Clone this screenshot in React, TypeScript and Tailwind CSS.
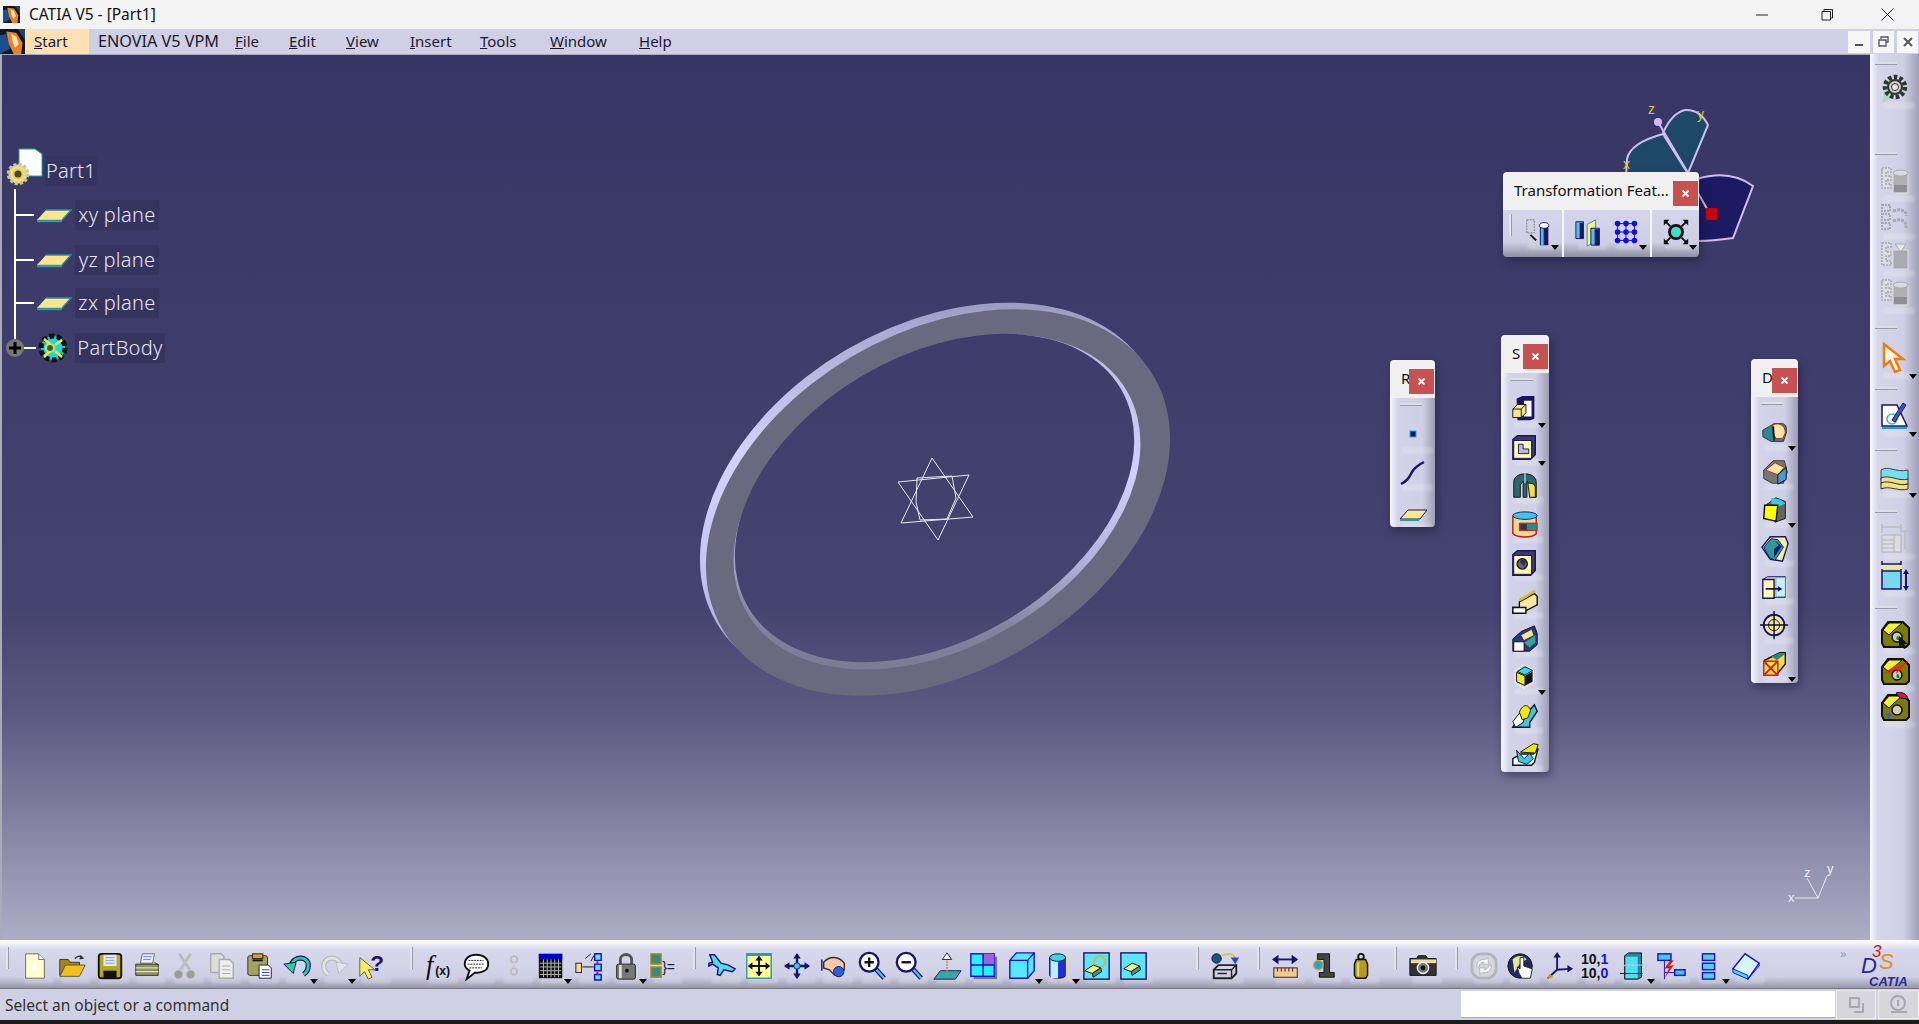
import React from 'react';

const NAVY = '#1b1464';

const Ic: React.FC<{ children: React.ReactNode; s?: number }> = ({ children, s = 32 }) => (
  <svg viewBox="0 0 32 32" width={s} height={s} className="relative block shrink-0">
    {children}
  </svg>
);

const CatiaMark: React.FC<{ s: number }> = ({ s }) => (
  <svg viewBox="0 0 20 20" width={s} height={s} className="block shrink-0">
    <rect width="20" height="20" fill="#0b1626" />
    <path d="M0 5l5-1 3 12-8 4z" fill="#1c4f8c" />
    <path d="M5 2l8 1 5 8-1 9-6 0-4-8z" fill="#e8812a" />
    <path d="M9 4l4 2 2 6-3 3-2-5z" fill="#ffe4a8" />
    <path d="M14 0l6 0 0 9z" fill="#22406a" />
  </svg>
);

const icons: Record<string, React.ReactNode> = {
  new: <><path d="M6 3h14l6 6v20H6z" fill="#ffffcc" stroke="#666" /><path d="M20 3v6h6" fill="#fff" stroke="#666" /><path d="M13 15l3-5 1 5 4-1-3 4 3 3-5-1-2 3-1-4-3-1z" fill="#fff" /></>,
  open: <><path d="M3 9h9l2 3h10v4H9L3 26z" fill="#a88408" stroke="#333" /><path d="M9 15h21l-6 12H3z" fill="#f3bf1c" stroke="#554" /><path d="M19 8c3-3 6-3 8-1" fill="none" stroke="#333" strokeWidth="1.5" /><path d="M25 4l4 4-5 1z" fill="#333" /></>,
  save: <><rect x="4" y="3" width="24" height="26" rx="3" fill="#b5a81c" stroke="#111" strokeWidth="2" /><rect x="9" y="4" width="14" height="12" fill="#dfe8f8" /><path d="M11 7h10M11 10h10M11 13h10" stroke="#7aa0e0" /><rect x="9" y="21" width="14" height="8" fill="#111" /></>,
  print: <><path d="M11 3h13l-2 10H9z" fill="#eef" stroke="#667" /><path d="M12 6h9M12 9h8" stroke="#4a8ae0" /><path d="M4 14h24v12H4z" fill="#8f9460" stroke="#333" /><path d="M4 18h24M4 22h24" stroke="#dfe0b0" strokeWidth="1.5" /><path d="M24 12l4 3" stroke="#333" /></>,
  cut: <><path d="M10 3l11 17M22 3L11 20" stroke="#bcbcbc" strokeWidth="3" /><circle cx="9" cy="25" r="4.5" fill="#9c9c9c" stroke="#bbb" /><circle cx="22" cy="25" r="4.5" fill="#9c9c9c" stroke="#bbb" /></>,
  copy: <><path d="M4 3h11l3 3v17H4z" fill="#ddd" stroke="#aaa" strokeWidth="1.5" /><path d="M13 9h11l4 4v16H13z" fill="#eee" stroke="#aaa" strokeWidth="1.5" /><path d="M16 16h9M16 20h9M16 24h9" stroke="#aaa" /></>,
  paste: <><rect x="3" y="5" width="21" height="21" rx="2" fill="#a3a35c" stroke="#333" /><rect x="8" y="3" width="11" height="5" fill="#d8a020" stroke="#222" /><path d="M8 10h11" stroke="#111" strokeWidth="2" /><path d="M15 15h10l3 3v11H15z" fill="#fff" stroke={NAVY} /><path d="M18 20h8M18 23h8M18 26h8" stroke="#2040d0" /></>,
  undo: <><path d="M10 15c2-10 19-10 18 1 0 4-2 7-5 9" fill="none" stroke={NAVY} strokeWidth="5.5" /><path d="M10 15c2-10 19-10 18 1 0 4-2 7-5 9" fill="none" stroke="#28d0a0" strokeWidth="3" /><path d="M2 14l13-2-3 12z" fill="#28d0a0" stroke={NAVY} /></>,
  redo: <><path d="M22 15C20 5 4 5 4 16c0 4 2 7 5 9" fill="none" stroke="#bbb" strokeWidth="5.5" /><path d="M22 15C20 5 4 5 4 16c0 4 2 7 5 9" fill="none" stroke="#e2e2ee" strokeWidth="3" /><path d="M30 14l-13-2 3 12z" fill="#e2e2ee" stroke="#bbb" /></>,
  help: <><path d="M3 7v20l5-5 4 8 4-2-4-8h7z" fill="#f6f060" stroke="#555" /><text x="14" y="21" fontSize="24" fontWeight="700" fill={NAVY} fontFamily="Liberation Sans, sans-serif">?</text></>,
  fx: <><text x="2" y="24" fontSize="28" fontStyle="italic" fill="#111" fontFamily="Liberation Serif, serif">f</text><text x="12" y="26" fontSize="13" fontWeight="700" fill="#111" fontFamily="Liberation Sans, sans-serif">(x)</text></>,
  speech: <><path d="M16 4c8 0 13 4 13 10s-6 10-14 9l-9 7 3-9c-3-2-5-4-5-7C4 8 9 4 16 4z" fill="#fff" stroke="#111" strokeWidth="2" /><path d="M8 10h16M7 14h18M9 18h13" stroke="#111" strokeDasharray="2 1" /></>,
  chain: <><circle cx="16" cy="9" r="3.5" fill="none" stroke="#bbb" strokeWidth="2" /><circle cx="16" cy="22" r="3.5" fill="none" stroke="#bbb" strokeWidth="2" /><path d="M16 12v6" stroke="#ccc" strokeWidth="3" /></>,
  table: <><rect x="3" y="3" width="25" height="26" fill="#111" /><rect x="3" y="3" width="25" height="6" fill="#0000cc" /><path d="M4 13h23M4 17h23M4 21h23M4 25h23M8 9v19M12 9v19M16 9v19M20 9v19M24 9v19" stroke="#bbb" /></>,
  tree: <><path d="M22 3h7v7h-7zM22 14h7v7h-7zM22 25h7v6h-7z" fill="#5fe0ff" stroke="#1010d0" strokeWidth="1.5" /><rect x="2" y="13" width="6" height="10" fill="#f8e070" stroke={NAVY} /><path d="M9 17h12M18 11l3-6M12 8l6-5" stroke="#111" /><path d="M25 11v3M25 22v3" stroke="#d01010" strokeWidth="2" /></>,
  lock: <><path d="M10 14V9c0-7 12-7 12 0v5" fill="none" stroke="#555" strokeWidth="3" /><rect x="6" y="14" width="20" height="16" rx="2" fill="#777" stroke="#222" /><path d="M10 15v14" stroke="#ddd" strokeWidth="3" /><circle cx="17" cy="21" r="2" fill="#111" /></>,
  brace: <><rect x="2" y="3" width="11" height="11" fill="#3a8a78" stroke="#b09020" strokeWidth="1.5" /><rect x="2" y="17" width="11" height="11" fill="#3a8a78" stroke="#b09020" strokeWidth="1.5" /><text x="14" y="22" fontSize="15" fill="#222" fontFamily="Liberation Sans, sans-serif">{'}='}</text></>,
  fly: <><path d="M3 4l5 0 7 9 8 2 7 4-3 3-9-2-4 6-3-1 1-7-6-4-4 2 0-3 4-1z" fill="#50dcec" stroke={NAVY} strokeWidth="1.5" /></>,
  fit: <><rect x="3" y="3" width="26" height="26" fill="#ffff99" stroke="#2a9a9a" strokeWidth="1.5" /><path d="M3 4h26" stroke="#2a9a9a" strokeWidth="2.5" /><path d="M16 6v20M6 16h20" stroke="#111" strokeWidth="2" /><path d="M16 5l-4 5h8zM16 27l-4-5h8zM4 16l5-4v8zM28 16l-5-4v8z" fill="#111" /></>,
  pan: <><path d="M16 4v24M4 16h24" stroke={NAVY} strokeWidth="2.5" /><path d="M16 2l-4 6h8zM16 30l-4-6h8zM2 16l6-4v8zM30 16l-6-4v8z" fill={NAVY} /><circle cx="16" cy="16" r="3.5" fill="#29d0ee" stroke={NAVY} /></>,
  rotate: <><path d="M5 12c6-7 16-7 22 1l0 7-10 6-6-6-6-2z" fill="#f4c8a8" stroke="#333" strokeWidth="1.5" /><circle cx="21" cy="22" r="5.5" fill="#2860e0" stroke={NAVY} /><path d="M3 9v12" stroke={NAVY} strokeWidth="1.5" /></>,
  zoomin: <><path d="M20 19l9 10" stroke={NAVY} strokeWidth="5" /><path d="M20 19l9 10" stroke="#46c8e8" strokeWidth="2.5" /><circle cx="13" cy="12" r="10" fill="#fff" stroke={NAVY} strokeWidth="2.5" /><path d="M13 7v10M8 12h10" stroke="#111" strokeWidth="2.5" /></>,
  zoomout: <><path d="M20 19l9 10" stroke={NAVY} strokeWidth="5" /><path d="M20 19l9 10" stroke="#46c8e8" strokeWidth="2.5" /><circle cx="13" cy="12" r="10" fill="#fff" stroke={NAVY} strokeWidth="2.5" /><path d="M8 12h10" stroke="#111" strokeWidth="2.5" /></>,
  normal: <><path d="M9 21h22l-6 9H2z" fill="#36a8a8" stroke={NAVY} /><path d="M16 8v16" stroke="#e08020" strokeWidth="1.5" strokeDasharray="2 1" /><path d="M16 2l-5 7h10z" fill="#fff" stroke={NAVY} /></>,
  quad: <><rect x="5" y="6" width="25" height="24" fill="#777" /><rect x="2" y="3" width="25" height="24" fill="#28f0ff" stroke="#1010d0" strokeWidth="1.5" /><rect x="15" y="3" width="12" height="12" fill="#a060d8" /><path d="M15 3v24M2 15h25" stroke="#1010d0" strokeWidth="1.5" /></>,
  cube: <><path d="M3 10l7-8h19v19l-7 8H3z" fill="#55e8ff" stroke="#1010e0" strokeWidth="1.5" /><path d="M3 10h19v19M22 10l7-8" fill="none" stroke="#1010e0" strokeWidth="1.5" /></>,
  cyl: <><path d="M6 7v19c0 4 17 4 17 0V7" fill="#2030d0" stroke="#111" /><path d="M7 8h8v21H7z" fill="#b8f0ff" /><ellipse cx="14.5" cy="7" rx="8.5" ry="4" fill="#30d8f0" stroke="#111" /><path d="M24 7v20" stroke="#f0e060" strokeWidth="1.5" /></>,
  hide: <><rect x="2" y="2" width="27" height="28" fill="#5ce4f8" stroke={NAVY} strokeWidth="1.5" /><circle cx="19" cy="11" r="6" fill="none" stroke="#c8b850" strokeWidth="2" /><path d="M3 21l9-6 8 3-9 6z" fill="#f0f080" stroke="#111" /><path d="M11 24l9-6 1 4-9 6z" fill="#30a090" stroke="#111" /></>,
  swap: <><rect x="2" y="2" width="27" height="28" fill="#5ce4f8" stroke={NAVY} strokeWidth="1.5" /><path d="M5 19l9-6 8 3-9 6z" fill="#f0f080" stroke="#111" /><path d="M13 22l9-6 1 4-9 6z" fill="#30a090" stroke="#111" /></>,
  spec: <><circle cx="7" cy="8" r="5" fill="#105a80" stroke="#111" /><path d="M13 5c6-3 12-3 14 3" fill="none" stroke="#e0c040" strokeWidth="2" /><path d="M22 7h9l-4 7z" fill="#1a50e0" /><path d="M4 20l5-5h19v9l-5 5H4z" fill="none" stroke="#222" strokeWidth="2" /><path d="M4 20h19v9M23 20l5-5M8 24h10" fill="none" stroke="#222" strokeWidth="1.5" /></>,
  measure: <><path d="M3 9h24" stroke={NAVY} strokeWidth="2" /><path d="M1 9l7-5v10zM29 9l-7-5v10z" fill={NAVY} /><rect x="3" y="18" width="25" height="10" fill="#f4c890" stroke="#222" /><path d="M7 18v4M11 18v4M15 18v4M19 18v4M23 18v4" stroke="#222" /></>,
  inertia: <><path d="M10 3h13v20h5v5H12v-5h5V9h-7z" fill="#444" stroke="#111" /><circle cx="11" cy="15" r="5" fill="#2ca0d0" stroke="#c8b020" strokeWidth="1.5" /></>,
  weight: <><circle cx="16" cy="6" r="3" fill="none" stroke="#111" strokeWidth="2" /><path d="M11 9h10l2 5v12l-2 3H11l-2-3V14z" fill="#b49a20" stroke="#111" strokeWidth="1.5" /><path d="M13 12v15" stroke="#eedd70" strokeWidth="2" /></>,
  camera: <><path d="M2 8h7l2-3h8l2 3h9v18H2z" fill="#333" stroke="#111" /><path d="M3 9h27v4H3z" fill="#f0d8a0" /><circle cx="16" cy="18" r="6" fill="#777" stroke="#eee" strokeWidth="1.5" /><circle cx="16" cy="18" r="2.5" fill="#111" /></>,
  refresh: <><rect x="3" y="3" width="26" height="26" rx="10" fill="#d6d6e0" stroke="#b4b4bc" strokeWidth="3" /><path d="M8 17c0-6 5-9 10-8l2-2 1 7-7 0 2-2c-3 0-5 2-5 5zM24 15c0 6-5 9-10 8l-2 2-1-7 7 0-2 2c3 0 5-2 5-5z" fill="#f4f4f8" stroke="#b4b4bc" /></>,
  hand: <><circle cx="15" cy="16" r="13" fill="#1e2a6a" stroke="#111" /><path d="M7 9c4-5 12-5 15 0l-7 4-6 10z" fill="#e8e890" /><path d="M15 7v12l-3-2 2 7 3 5h9l2-10-9-3V7z" fill="#fff" stroke="#222" /></>,
  axes: <><path d="M14 4v16l14-1M14 20L4 29" fill="none" stroke={NAVY} strokeWidth="2" /><path d="M14 1l-4 6h8zM31 19l-6-4v8z" fill={NAVY} /><path d="M3 30l7-2-4-4z" fill="#c8a020" /></>,
  num: <><text x="0" y="14" fontSize="15" fontWeight="700" fill="#111" fontFamily="Liberation Sans, sans-serif">10,<tspan fill="#1010e0">1</tspan></text><text x="0" y="29" fontSize="15" fontWeight="700" fill="#111" fontFamily="Liberation Sans, sans-serif">10,<tspan fill="#1010e0">0</tspan></text></>,
  shade: <><path d="M6 5l4-3h14v26l-4 2H6z" fill="#1e8aa0" stroke="#111" /><path d="M7 6h13v23H7z" fill="#4ce0f0" /><path d="M1 24l5-9h24l-5 9z" fill="none" stroke="#ccd" /><path d="M1 24h24" stroke="#111" /></>,
  ztree: <><rect x="2" y="3" width="14" height="7" fill="#3cc8e8" stroke="#1010d0" strokeWidth="1.5" /><rect x="20" y="20" width="11" height="6" fill="#3cc8e8" stroke="#1010d0" strokeWidth="1.5" /><path d="M9 10v20M9 23h11" stroke="#1010d0" /><path d="M15 10l-6 9 5-1-5 11 10-14-5 1 5-6z" fill="#e01010" /></>,
  list: <><rect x="9" y="3" width="13" height="7" fill="#50d0e8" stroke="#1010d0" strokeWidth="1.5" /><rect x="9" y="13" width="13" height="7" fill="#50d0e8" stroke="#1010d0" strokeWidth="1.5" /><rect x="9" y="23" width="13" height="7" fill="#50d0e8" stroke="#1010d0" strokeWidth="1.5" /></>,
  book: <><path d="M2 19L15 3l15 10-12 17z" fill="#d8f4ff" stroke="#1010e0" strokeWidth="1.5" /><path d="M2 19v4l16 7v-4z" fill="#40e0f0" stroke="#1010e0" /><path d="M30 13v3L18 30" fill="none" stroke="#1010e0" /></>,
  gear: <><path d="M3 31L31 16 9 5z" fill="#a8dcc2" /><circle cx="16" cy="15" r="10" fill="none" stroke="#333" strokeWidth="4.5" strokeDasharray="3.5 2.2" /><circle cx="16" cy="15" r="7" fill="#ccc" stroke="#333" strokeWidth="2" /><circle cx="16" cy="15" r="3.5" fill="#e8e8e8" stroke="#333" /></>,
  db1: <><path d="M3 3h9v4H7v4h5v4H7v4h5v4H3zM3 3v4" fill="#ddd" stroke="#a8a8b2" strokeWidth="1.5" strokeDasharray="2 1" /><path d="M14 8h15v20H14z" fill="#b0b0b4" stroke="#dcdce4" /><path d="M15 20h13v7H15z" fill="#8e8e94" /><ellipse cx="21.5" cy="8" rx="7.5" ry="3" fill="#dadae4" stroke="#a8a8b2" /></>,
  db2: <><path d="M3 2h8v6H3zM3 11h8v6H3zM3 20h8v6H3z" fill="none" stroke="#a8a8b2" strokeWidth="2" strokeDasharray="2 1" /><path d="M14 8c8-3 14 0 13 5M14 18c8-3 14 0 13 7" fill="none" stroke="#a8a8b2" strokeWidth="3" strokeDasharray="3 1" /></>,
  db3: <><path d="M3 3h9v4H7v5h5v4H7v5h5v4H3z" fill="#ddd" stroke="#a8a8b2" strokeWidth="1.5" strokeDasharray="2 1" /><path d="M14 10h15v19H14z" fill="#aaaab0" stroke="#dcdce4" /><path d="M16 4h11l-5 8z" fill="#e4e4ea" stroke="#a8a8b2" /></>,
  cursor: <><path d="M5 2v22l6-5 5 11 5-2-5-11h8z" fill="#fff2e0" stroke="#f07c18" strokeWidth="2.5" /></>,
  sketch: <><path d="M3 5h15l10 21H3z" fill="#fff" stroke={NAVY} strokeWidth="1.5" /><path d="M3 28h25" stroke="#20a0d0" strokeWidth="2" /><circle cx="13" cy="19" r="5" fill="none" stroke="#30c0c0" strokeWidth="1.5" /><path d="M13 20L24 3l3 2-11 17z" fill="#3858c0" stroke={NAVY} /></>,
  stack: <><path d="M2 9c8-5 14 3 27 0v10c-10 3-18-4-27 0z" fill="#70e0f8" stroke="#444" /><path d="M2 17c8-4 18 4 27 1v5c-10 3-18-4-27 0z" fill="#f0e080" stroke="#333" /><path d="M2 22c8-4 18 4 27 1v5c-10 3-18-4-27 0z" fill="#f0e080" stroke="#333" /></>,
  greydim: <><path d="M3 4h19M3 1v9M22 1v9M26 8v18M23 8h6" fill="none" stroke="#bcbcc4" strokeWidth="1.5" /><path d="M3 12h19v17H3z" fill="#ddd" stroke="#b0b0b8" /><path d="M3 17h12M3 21h12M3 25h12M15 12v17" stroke="#b0b0b8" /></>,
  bluedim: <><path d="M3 4h19M3 1v9M22 1v9" stroke={NAVY} strokeWidth="1.5" fill="none" /><rect x="2" y="5" width="21" height="4" fill="#f0e890" /><rect x="3" y="11" width="19" height="18" fill="#78d8ec" stroke={NAVY} strokeWidth="1.5" /><path d="M27 11v18" stroke={NAVY} strokeWidth="2" /><path d="M27 9l-3 5h6zM27 31l-3-5h6z" fill={NAVY} /></>,
  grn1: <><path d="M3 12l6-8h15l6 6v16l-3 3H5l-2-4z" fill="#7c7c00" stroke="#111" strokeWidth="2" /><path d="M4 12l6-7h13l-9 8-4 4z" fill="#f4f030" stroke="#111" /><circle cx="18" cy="19" r="5" fill="#ccc" stroke="#111" strokeWidth="1.5" /><path d="M19 17l2 6-4-2z" fill="#188018" /><path d="M20 18v12l3-3 2 4 2-1-2-4h4z" fill="#111" /></>,
  grn2: <><path d="M3 12l6-8h15l6 6v16l-3 3H5l-2-4z" fill="#7c7c00" stroke="#111" strokeWidth="2" /><path d="M4 12l6-7h13l-9 8-4 4z" fill="#f4f030" stroke="#111" /><circle cx="18" cy="20" r="5" fill="#ccc" stroke="#111" strokeWidth="1.5" /><path d="M19 18l2 6-4-2z" fill="#188018" /><path d="M4 19L18 9l-1 5 13-9-13 14 1-5z" fill="#f02010" /></>,
  grn3: <><path d="M3 12l6-8h15l6 6v16l-3 3H5l-2-4z" fill="#7c7c00" stroke="#111" strokeWidth="2" /><path d="M4 12l6-7h13l-9 8-4 4z" fill="#f4f030" stroke="#111" /><circle cx="18" cy="19" r="5" fill="#ccc" stroke="#111" strokeWidth="1.5" /><path d="M17 2c6-2 11 1 12 6l-8-1z" fill="#d02020" stroke={NAVY} /><path d="M5 22l8 1-3 5z" fill="#3060d0" /></>,
  pad: <><path d="M7 4l6-3h13v24l-4 2H8z" fill={NAVY} /><path d="M15 6h8v17h-8z" fill="#fff" /><path d="M3 15l5-5h9v9l-5 5H3z" fill="#f4e890" stroke="#111" /><path d="M3 15h9v9M12 15l5-5" stroke="#111" fill="none" /></>,
  pocket: <><path d="M3 7l5-4h19v20l-5 5H3z" fill="#3a3a70" stroke={NAVY} strokeWidth="1.5" /><rect x="4" y="8" width="19" height="19" fill="#ffffa8" stroke={NAVY} /><path d="M9 12h5v5h6v5H9z" fill="#b8b8d8" stroke={NAVY} /></>,
  shaft: <><path d="M4 28V12c0-12 24-12 24 0v16h-7V15l-3-4v17h-4V11l-3 4v13z" fill="#2a6870" stroke="#111" /><path d="M19 13c3 0 7 0 8 4v11h-6z" fill="#f4e040" stroke="#111" /><path d="M16 1v12" stroke="#fff" /></>,
  groove: <><path d="M3 7h25v18c-4 5-20 5-25 0z" fill="#f4d890" stroke="#c01818" strokeWidth="1.5" /><ellipse cx="16" cy="6" rx="13" ry="4" fill="#38c8f0" stroke={NAVY} /><path d="M10 14h19v8H10z" fill="#2a8a90" stroke="#c01818" /><path d="M11 15h7v6h-7z" fill="#334" /></>,
  hole: <><path d="M3 7l5-4h19v21l-5 5H3z" fill="#3a3a70" stroke={NAVY} strokeWidth="1.5" /><rect x="4" y="8" width="19" height="20" fill="#ffffa8" stroke={NAVY} /><circle cx="13" cy="17" r="5.5" fill="#666" stroke={NAVY} strokeWidth="1.5" /><path d="M10 14a5 5 0 0 1 7 0l-2 6z" fill="#334" /></>,
  rib: <><path d="M3 28v-5h7v-6l16-9 3 3v9L14 28z" fill="#f6e8a0" stroke="#111" strokeWidth="1.5" /><path d="M3 23h14v6H3z" fill="#fff" stroke="#111" strokeWidth="1.5" /><path d="M10 15c6-2 10-7 17-10" stroke="#d8c020" strokeWidth="3" fill="none" /></>,
  slot: <><path d="M3 29V16l9-8 14-6 3 8v12l-8 7H3z" fill="#2a3a78" stroke="#111" /><path d="M4 19h11v10H4z" fill="#fff" stroke="#111" /><path d="M12 12l11-6 2 6-10 5z" fill="#f4e890" /><path d="M15 20l12-8v8l-6 5z" fill="#38a0a0" /></>,
  solid: <><path d="M5 10l10-7 10 5v14l-10 6-9-5z" fill="none" stroke="#fff" strokeDasharray="3 1" /><path d="M8 10l8-5 8 4-8 5z" fill="#30d8f0" stroke="#111" /><path d="M7 11l9 4v10l-9-4z" fill="#f0f020" stroke="#111" /><path d="M16 15l8-5v11l-8 4z" fill="#111" /></>,
  stiff: <><path d="M3 28l9-14h5l9-10 3 7-8 12v5z" fill="#38c8e8" stroke="#111" strokeWidth="1.5" /><path d="M3 22l8-10h6l-3 11-8 5z" fill="#fff" stroke="#111" /><path d="M10 12c3-8 9-10 12-2l-3 8-6 2z" fill="#f0e800" stroke="#111" /></>,
  mloft: <><path d="M3 28v-7l9-5h13l5-6-4 15-3 3z" fill="#fff" stroke="#111" strokeWidth="1.5" /><path d="M11 14l14-9 5 1-3 9z" fill="#f0e800" stroke="#111" /><path d="M7 12l8 9 6-6 4 6-7 6-9-3z" fill="#38c8e8" stroke="#111" /></>,
  fillet: <><path d="M3 13l12-7h9c3 0 5 4 4 10l-3 9H12L3 20z" fill="#2a8a90" stroke="#333" /><path d="M14 7c6-2 13 0 13 9l-3 6h-7c-3-5-4-10-3-15z" fill="#ffe8a0" stroke="#c01818" /><path d="M15 24l-1-15" stroke="#111" strokeWidth="2" /></>,
  chamfer: <><path d="M4 14l10-10h12l3 12-4 12H13l-9-5z" fill="#777" stroke="#333" /><path d="M6 14l10-8 10 5-7 8z" fill="#ffe8a0" stroke="#c01818" /><path d="M19 19l9-8v13l-9 5z" fill="#4a9ad0" stroke="#111" /></>,
  draft: <><path d="M6 11l11-8 10 4v18l-11 4z" fill="#666" stroke="#111" /><path d="M12 3l10 2 5 4-8 4-7-4z" fill="#38c8e8" /><path d="M5 11h14l-2 17-13-3z" fill="#ffff00" stroke="#111" strokeWidth="1.5" /></>,
  shell: <><path d="M2 14l9-11h16l3 7-6 19-13-2z" fill="#f0f0a0" stroke={NAVY} strokeWidth="1.5" /><path d="M4 14l8-9 7 1 6 8-9 14-6-3z" fill="#2a9a9a" stroke={NAVY} /><path d="M16 7l7 6-8 12v-9l5-4z" fill={NAVY} /></>,
  thick: <><path d="M3 8h12v20H3z" fill="#ffffb0" stroke={NAVY} strokeWidth="1.5" /><path d="M3 8l5-3h19v22h-12" fill="none" stroke={NAVY} /><path d="M17 6h10v20H17z" fill="#c8f0f0" stroke="#40a0a0" strokeDasharray="2 1" /><path d="M6 18h16" stroke={NAVY} strokeWidth="2" /><path d="M24 18l-5-3v6z" fill={NAVY} /></>,
  target: <><circle cx="15" cy="15" r="11" fill="#f0e8a0" stroke={NAVY} strokeWidth="2" /><circle cx="15" cy="15" r="6" fill="none" stroke={NAVY} /><path d="M15 0v30M0 15h30" stroke="#111" strokeWidth="1.5" /></>,
  remove: <><path d="M5 12l16-8h6v12l-9 11H5z" fill="#f4e040" stroke="#111" strokeWidth="1.5" /><path d="M12 8l9-4 6 1-9 7z" fill="#2a8a80" /><path d="M4 13h15v15H4z" fill="#f4e040" stroke="#e01010" strokeWidth="1.5" /><path d="M5 14l13 13M18 14L5 27" stroke="#e01010" strokeWidth="2" /></>,
  dot: <><rect x="13" y="12" width="6" height="6" fill={NAVY} stroke="#20b0e0" /></>,
  line: <><path d="M4 28c6-3 8-6 11-12 3-5 8-8 12-10" fill="none" stroke={NAVY} strokeWidth="2.5" /></>,
  plane: <><path d="M3 24l8-9h19l-7 9z" fill="#ffe88c" stroke={NAVY} /><path d="M3 25h19" stroke="#20a0a0" strokeWidth="2" /></>,
  trans: <><path d="M4 3h8v14H4z" fill="none" stroke="#777" strokeDasharray="2 1" /><path d="M8 19l6 6" stroke="#111" strokeWidth="2" /><path d="M18 10h9v20h-9z" fill={NAVY} /><path d="M19 10h3v20h-3z" fill="#40c8f0" /><ellipse cx="22.5" cy="9" rx="5" ry="3" fill="#fff" stroke={NAVY} /></>,
  mirror: <><path d="M14 8l9-5v23l-9 5z" fill="#f4f090" stroke="#2a9a9a" /><path d="M2 5h8v18H2z" fill="#40c8f0" stroke={NAVY} /><path d="M18 12h9v18h-9z" fill="#40c8f0" stroke={NAVY} /><path d="M6 6h4v17H6zM22 13h5v17h-5z" fill={NAVY} /></>,
  grid: <><path d="M7 7h18M7 16h18M7 25h18M7 7v18M16 7v18M25 7v18" stroke="#1010c0" /><g fill="#1010e0"><circle cx="7" cy="7" r="3" /><circle cx="16" cy="7" r="3" /><circle cx="25" cy="7" r="3" /><circle cx="7" cy="16" r="3" /><circle cx="16" cy="16" r="3" /><circle cx="25" cy="16" r="3" /><circle cx="7" cy="25" r="3" /><circle cx="16" cy="25" r="3" /><circle cx="25" cy="25" r="3" /></g></>,
  scale: <><circle cx="16" cy="16" r="7" fill="#3ce0c8" stroke="#111" strokeWidth="3" /><path d="M4 4l6 6M28 4l-6 6M4 28l6-6M28 28l-6-6" stroke="#111" strokeWidth="2" /><path d="M3 3h6l-6 6zM29 3h-6l6 6zM3 29h6l-6-6zM29 29h-6l6-6z" fill="#111" /></>,
};

const Drop: React.FC = () => (
  <span className="absolute right-[-6px] bottom-[-3px] w-0 h-0 border-l-[4.5px] border-r-[4.5px] border-t-[5px] border-l-transparent border-r-transparent border-t-black" />
);

// the faint white smudge CATIA leaves under its toolbar icons
const Icon: React.FC<{ name: string; s?: number; arrow?: boolean }> = ({ name, s = 32, arrow }) => (
  <div className="relative flex items-center justify-center">
    <span className="absolute left-[4px] right-[-4px] bottom-[-3px] h-[7px] bg-white/20 rounded-full blur-[1px]" />
    <Ic s={s}>{icons[name]}</Ic>
    {arrow && <Drop />}
  </div>
);

const Grip: React.FC = () => <div className="w-[3px] h-[22px] bg-[#e4e4ee] border-r border-[#9a9aae] shrink-0" />;
const HGrip: React.FC<{ className?: string }> = ({ className = '' }) => (
  <div className={`h-[3px] bg-[#dedee8] border-b border-[#9a9aae] ${className}`} />
);

const bottomGroups = [
  { w: 'w-[404px]', items: [['new'], ['open'], ['save'], ['print'], ['cut'], ['copy'], ['paste'], ['undo', 1], ['redo', 1], ['help']] },
  { w: 'w-[283px]', items: [['fx'], ['speech'], ['chain'], ['table', 1], ['tree'], ['lock', 1], ['brace']] },
  { w: 'w-[503px]', items: [['fly'], ['fit'], ['pan'], ['rotate'], ['zoomin'], ['zoomout'], ['normal'], ['quad'], ['cube', 1], ['cyl', 1], ['hide'], ['swap']] },
  { w: 'w-[61px]', items: [['spec']] },
  { w: 'w-[137px]', items: [['measure'], ['inertia'], ['weight']] },
  { w: 'w-[61px]', items: [['camera']] },
  { w: 'w-[350px]', items: [['refresh'], ['hand'], ['axes'], ['num'], ['shade', 1], ['ztree'], ['list', 1], ['book']] },
] as { w: string; items: [string, number?][] }[];

const menu = [
  { u: 'F', t: 'ile', c: 'w-[54px]' },
  { u: 'E', t: 'dit', c: 'w-[57px]' },
  { u: 'V', t: 'iew', c: 'w-[64px]' },
  { u: 'I', t: 'nsert', c: 'w-[70px]' },
  { u: 'T', t: 'ools', c: 'w-[70px]' },
  { u: 'W', t: 'indow', c: 'w-[89px]' },
  { u: 'H', t: 'elp', c: 'w-[40px]' },
];

const CloseBtn: React.FC<{ className: string }> = ({ className }) => (
  <div className={`absolute w-[25px] h-[25px] bg-[#c75050] flex items-center justify-center ${className}`}>
    <svg width="9" height="9" viewBox="0 0 9 9"><path d="M1.5 1.5l6 6M7.5 1.5l-6 6" stroke="#fff" strokeWidth="1.8" /></svg>
  </div>
);

const FloatBar: React.FC<{ title: string; className: string; children: React.ReactNode }> = ({ title, className, children }) => (
  <div className={`absolute flex flex-col rounded-[4px] overflow-hidden shadow-[2px_4px_8px_rgba(20,20,50,0.45)] ${className}`}>
    <div className="relative h-[38px] shrink-0 bg-[#f0f0f0] pl-[11px] pt-[8px] text-[15px] leading-[20px] text-[#111] whitespace-nowrap font-['Noto_Sans',sans-serif]">
      {title}
      <CloseBtn className="right-[1px] top-[9px]" />
    </div>
    {children}
  </div>
);

const VBody: React.FC<{ className?: string; children: React.ReactNode }> = ({ className = '', children }) => (
  <div className={`flex-1 flex flex-col bg-[linear-gradient(90deg,#f8f8fc_0%,#d2d2e8_18%,#cfcfe6_72%,#9c9cb4_100%)] ${className}`}>
    {children}
  </div>
);

const TreeLabel: React.FC<{ text: string; c: string }> = ({ text, c }) => (
  <div className={`h-[30px] flex items-center justify-center bg-[#35345f] rounded-[2px] text-[#e4e4f2] text-[20px] tracking-[0.3px] font-['Noto_Sans',sans-serif] font-light whitespace-nowrap ${c}`}>{text}</div>
);

const TreePlane: React.FC = () => (
  <svg width="36" height="16" viewBox="0 0 36 16" className="shrink-0">
    <path d="M1 13L10 3h25l-9 10z" fill="#ffe48c" />
    <path d="M10 3h25l-9 10" fill="none" stroke="#2f8f9f" strokeWidth="1.5" />
    <path d="M1 14h25" stroke="#2a9aa8" strokeWidth="2.5" />
  </svg>
);

const Viewport: React.FC = () => (
  <div className="relative flex-1 border-l-2 border-t border-[#aaaaba] bg-[linear-gradient(180deg,#373565_0%,#45436f_62%,#5b5880_74%,#adadc5_100%)] overflow-hidden">
    <svg viewBox="0 54 1868 886" className="absolute top-0 left-[-2px] w-[1868px] h-[886px]">
      <defs>
        <linearGradient id="lit" x1="0" y1="1" x2="1" y2="0">
          <stop offset="0" stopColor="#7a7a96" />
          <stop offset="0.12" stopColor="#9a9ac0" />
          <stop offset="0.35" stopColor="#c6c6f2" />
          <stop offset="0.55" stopColor="#d2d2fa" />
          <stop offset="0.8" stopColor="#a8a8d0" />
          <stop offset="1" stopColor="#7a7a98" />
        </linearGradient>
        <linearGradient id="litIn" x1="0" y1="1" x2="1" y2="0">
          <stop offset="0" stopColor="#6f6f88" />
          <stop offset="0.25" stopColor="#8484a0" />
          <stop offset="0.4" stopColor="#b4b4dc" />
          <stop offset="0.58" stopColor="#d0d0fa" />
          <stop offset="0.8" stopColor="#c0c0e8" />
          <stop offset="1" stopColor="#8c8cac" />
        </linearGradient>
        <mask id="hole" maskUnits="userSpaceOnUse" x="0" y="54" width="1868" height="886">
          <rect x="0" y="54" width="1868" height="886" fill="#fff" />
          <ellipse cx="934.5" cy="497" rx="216" ry="142" transform="rotate(-30.4 934.5 497)" fill="#000" />
        </mask>
      </defs>
      <g mask="url(#hole)">
        <ellipse cx="932" cy="495" rx="250" ry="169.5" transform="rotate(-30.4 932 495)" fill="url(#lit)" />
        <ellipse cx="938" cy="501.5" rx="250" ry="169.5" transform="rotate(-30.4 938 501.5)" fill="#696a80" />
        <ellipse cx="937" cy="501" rx="220" ry="145" transform="rotate(-30.4 937 501)" fill="url(#litIn)" />
      </g>
      {/* sketch wireframe in the middle of the ring */}
      <g fill="none" stroke="#e8e8f2" strokeWidth="1">
        <path d="M932 457L973 516 901 522z" />
        <path d="M938 539L969 474 898 481z" />
        <path d="M917 477L952 475 956 497 947 518 920 519 916 501z" />
      </g>
      {/* compass */}
      <g stroke="#d0bcf0" strokeWidth="2">
        <path d="M1688 172L1663 132Q1672 112 1685 109Q1700 108 1708 124z" fill="#1d4868" />
        <path d="M1663 133Q1630 142 1627 158L1626 176L1690 176z" fill="#1d4868" />
        <path d="M1697 178Q1730 168 1753 185L1733 237Q1712 240 1698 240z" fill="#1c1a62" />
        <path d="M1658 121L1688 172M1698 192L1710 213" fill="none" />
      </g>
      <circle cx="1658" cy="121" r="4" fill="#d0bcf0" />
      <rect x="1706" y="207" width="11" height="12" fill="#cc0000" />
      <g fill="#dccb22" fontSize="14" fontFamily="Liberation Sans, sans-serif">
        <text x="1648" y="113">z</text>
        <text x="1697" y="118">y</text>
        <text x="1623" y="168">x</text>
      </g>
      {/* small axis bottom right */}
      <path d="M1795 897H1818L1807 877M1818 897L1827 875" fill="none" stroke="#e8e8f2" strokeWidth="1" />
      <g fill="#eeeef6" fontSize="13" fontFamily="Liberation Sans, sans-serif">
        <text x="1788" y="901">x</text>
        <text x="1827" y="872">y</text>
        <text x="1804" y="876">z</text>
      </g>
    </svg>

    {/* spec tree */}
    <div className="absolute left-0 top-[101px] w-[170px] flex flex-col">
      <div className="absolute left-[12px] top-[33px] w-[2px] h-[150px] bg-white" />
      <div className="flex h-[30px] items-center">
        <div className="relative w-[43px] h-[30px] shrink-0">
          <svg width="40" height="42" viewBox="0 0 40 42" className="absolute left-[3px] top-[-8px]">
            <path d="M14 1h16l7 5v22H14z" fill="#fff" stroke="#20a0a0" />
            <circle cx="13" cy="26" r="9.5" fill="#f0e080" stroke="#c8c8a0" strokeWidth="3.5" strokeDasharray="3 2" />
            <circle cx="13" cy="26" r="4.5" fill="#444" stroke="#e8d040" strokeWidth="2" />
          </svg>
        </div>
        <TreeLabel text="Part1" c="w-[52px]" />
      </div>
      {['xy plane', 'yz plane', 'zx plane'].map((t, i) => (
        <div key={t} className={`flex h-[30px] items-center ${i === 0 ? 'mt-[14px]' : i === 1 ? 'mt-[15px]' : 'mt-[13px]'}`}>
          <div className="w-[19px] h-[2px] bg-white ml-[13px] shrink-0" />
          <div className="ml-[2px] w-[39px] shrink-0"><TreePlane /></div>
          <TreeLabel text={t} c="w-[84px]" />
        </div>
      ))}
      <div className="flex h-[30px] items-center mt-[15px]">
        <div className="relative w-[34px] h-[30px] shrink-0">
          <div className="absolute left-[4px] top-[6px] w-[18px] h-[18px] rounded-full bg-[#777] flex items-center justify-center">
            <svg width="14" height="14" viewBox="0 0 14 14"><path d="M7 1v12M1 7h12" stroke="#000" strokeWidth="3" /></svg>
          </div>
          <div className="absolute left-[22px] top-[14px] w-[12px] h-[2px] bg-white" />
        </div>
        <svg width="35" height="35" viewBox="0 0 35 35" className="shrink-0">
          <circle cx="17" cy="17" r="12" fill="#20c8d8" stroke="#111" strokeWidth="5" strokeDasharray="5 2.5" />
          <circle cx="17" cy="17" r="9" fill="#18d8e8" />
          <path d="M8 8l6 5M26 26l-7-6M26 9l-7 5M8 26l6-6" stroke="#f0f030" strokeWidth="2.5" />
          <circle cx="14" cy="17" r="4" fill="#206060" stroke="#f0e020" strokeWidth="2" />
        </svg>
        <TreeLabel text="PartBody" c="w-[90px] ml-[4px]" />
      </div>
    </div>

    {/* floating toolbars */}
    <FloatBar title="Transformation Feat..." className="left-[1501px] top-[117px] w-[196px] h-[85px]">
      <div className="flex-1 flex items-start bg-[linear-gradient(180deg,#d4d4ea_0%,#cfcfe6_68%,#8f8fa4_100%)]">
        <div className="ml-[6px] mt-[4px]"><Grip /></div>
        <div className="ml-[11px] mt-[7px]"><Icon name="trans" s={30} arrow /></div>
        <div className="ml-[9px] w-[2px] h-[47px] bg-[#f4f4fa]" />
        <div className="ml-[10px] mt-[7px]"><Icon name="mirror" s={30} /></div>
        <div className="ml-[7px] mt-[7px]"><Icon name="grid" s={30} arrow /></div>
        <div className="ml-[9px] w-[2px] h-[47px] bg-[#f4f4fa]" />
        <div className="ml-[9px] mt-[7px]"><Icon name="scale" s={30} arrow /></div>
      </div>
    </FloatBar>

    <FloatBar title="R" className="left-[1388px] top-[305px] w-[45px] h-[167px]">
      <VBody className="items-center">
        <HGrip className="w-[22px] mt-[5px] mr-[3px]" />
        <div className="mt-[13px]"><Icon name="dot" s={32} /></div>
        <div className="mt-[5px]"><Icon name="line" s={32} /></div>
        <div className="mt-[7px]"><Icon name="plane" s={32} /></div>
      </VBody>
    </FloatBar>

    <FloatBar title="S" className="left-[1499px] top-[280px] w-[48px] h-[437px]">
      <VBody className="items-center">
        <HGrip className="w-[22px] mt-[5px] mr-[6px]" />
        {[['pad', 1], ['pocket', 1], ['shaft'], ['groove'], ['hole'], ['rib'], ['slot'], ['solid', 1], ['stiff'], ['mloft']].map(([n, a], i) => (
          <div key={i} className={`h-[38.2px] flex items-center ${i === 0 ? 'mt-[10px]' : ''}`}>
            <Icon name={n as string} s={30} arrow={!!a} />
          </div>
        ))}
      </VBody>
    </FloatBar>

    <FloatBar title="D" className="left-[1749px] top-[304px] w-[47px] h-[324px]">
      <VBody className="items-center">
        <HGrip className="w-[22px] mt-[5px] mr-[6px]" />
        {[['fillet', 1], ['chamfer'], ['draft', 1], ['shell'], ['thick'], ['target'], ['remove', 1]].map(([n, a], i) => (
          <div key={i} className={`h-[38.5px] flex items-center ${i === 0 ? 'mt-[9px]' : ''}`}>
            <Icon name={n as string} s={30} arrow={!!a} />
          </div>
        ))}
      </VBody>
    </FloatBar>
  </div>
);

const RightBar: React.FC = () => (
  <div className="w-[49px] shrink-0 flex flex-col bg-[linear-gradient(90deg,#fbfbfe_0%,#d6d6ea_16%,#cfcfe6_68%,#a0a0b8_100%)]">
    <HGrip className="w-[22px] ml-[5px] mt-[8px]" />
    <div className="mt-[5px] h-[36px] flex justify-center"><Icon name="gear" s={32} /></div>
    <HGrip className="w-[22px] ml-[5px] mt-[46px]" />
    <div className="mt-[8px] h-[36px] flex justify-center"><Icon name="db1" s={32} /></div>
    <div className="mt-[2px] h-[36px] flex justify-center"><Icon name="db2" s={32} /></div>
    <div className="mt-[1px] h-[36px] flex justify-center"><Icon name="db3" s={32} /></div>
    <div className="mt-[1px] h-[36px] flex justify-center"><Icon name="db1" s={32} /></div>
    <HGrip className="w-[22px] ml-[5px] mt-[15px]" />
    <div className="mt-[11px] h-[36px] flex justify-center"><Icon name="cursor" s={32} arrow /></div>
    <HGrip className="w-[22px] ml-[5px] mt-[11px]" />
    <div className="mt-[8px] h-[36px] flex justify-center"><Icon name="sketch" s={32} arrow /></div>
    <HGrip className="w-[22px] ml-[5px] mt-[14px]" />
    <div className="mt-[8px] h-[36px] flex justify-center"><Icon name="stack" s={32} arrow /></div>
    <HGrip className="w-[22px] ml-[5px] mt-[15px]" />
    <div className="mt-[8px] h-[36px] flex justify-center"><Icon name="greydim" s={32} /></div>
    <div className="mt-[1px] h-[36px] flex justify-center"><Icon name="bluedim" s={32} /></div>
    <HGrip className="w-[22px] ml-[5px] mt-[12px]" />
    <div className="mt-[7px] h-[36px] flex justify-center"><Icon name="grn1" s={32} /></div>
    <div className="mt-[1px] h-[36px] flex justify-center"><Icon name="grn2" s={32} /></div>
    <div className="h-[36px] flex justify-center"><Icon name="grn3" s={32} /></div>
  </div>
);

export default function App() {
  return (
    <div className="w-[1919px] h-[1024px] flex flex-col overflow-hidden bg-[#cfcfe6] font-['Noto_Sans',sans-serif]">
      {/* window title */}
      <div className="h-[29px] shrink-0 bg-[#f3f3f3] flex items-center">
        <div className="ml-[3px]"><CatiaMark s={17} /></div>
        <span className="ml-[9px] text-[15.5px] text-[#111]">CATIA V5 - [Part1]</span>
        <div className="ml-auto flex items-center">
          <svg width="12" height="12" viewBox="0 0 12 12" className="mr-[53px]"><path d="M0 6h12" stroke="#222" /></svg>
          <svg width="13" height="13" viewBox="0 0 13 13" className="mr-[47px]"><path d="M3 3V1.5h8.5V10H10M1 3.5h8.5V12H1z" fill="none" stroke="#222" /></svg>
          <svg width="13" height="13" viewBox="0 0 13 13" className="mr-[25px]"><path d="M0.5 0.5l12 12M12.5 0.5l-12 12" stroke="#222" /></svg>
        </div>
      </div>

      {/* menu bar */}
      <div className="h-[25px] shrink-0 flex items-center bg-[#cfcfe6] text-[15px] text-[#1a1a2a]">
        <CatiaMark s={25} />
        <div className="w-[64px] h-[25px] shrink-0 bg-[#fde0b4] pl-[9px] leading-[25px]"><span className="underline">S</span>tart</div>
        <div className="w-[146px] shrink-0 pl-[9px] text-[16.2px]">ENOVIA V5 VPM</div>
        {menu.map((m) => (
          <div key={m.u} className={`shrink-0 ${m.c}`}><span className="underline">{m.u}</span>{m.t}</div>
        ))}
        <div className="ml-auto flex gap-[3px] pr-[1px]">
          <div className="w-[22px] h-[22px] bg-[#f6f6f6] flex items-center justify-center">
            <svg width="10" height="10" viewBox="0 0 10 10"><path d="M1 8h8" stroke="#555" strokeWidth="2" /></svg>
          </div>
          <div className="w-[21px] h-[22px] bg-[#f6f6f6] flex items-center justify-center">
            <svg width="11" height="11" viewBox="0 0 11 11"><path d="M3 3V1h7v5H8M1 4h7v6H1z" fill="none" stroke="#555" strokeWidth="1.3" /></svg>
          </div>
          <div className="w-[21px] h-[22px] bg-[#f6f6f6] flex items-center justify-center">
            <svg width="10" height="10" viewBox="0 0 10 10"><path d="M1 1l8 8M9 1l-8 8" stroke="#555" strokeWidth="2" /></svg>
          </div>
        </div>
      </div>

      {/* viewport and right toolbar */}
      <div className="flex-1 flex min-h-0">
        <Viewport />
        <RightBar />
      </div>

      {/* bottom toolbar */}
      <div className="relative h-[49px] shrink-0 flex pl-[6px] bg-[linear-gradient(180deg,#ffffff_0%,#d8d8ec_20%,#cfcfe6_74%,#9898ac_98%,#555_100%)]">
        {bottomGroups.map((g, i) => (
          <div key={i} className={`flex shrink-0 items-start ${g.w}`}>
            <div className="mt-[7px]"><Grip /></div>
            <div className="flex pl-[7px] pt-[11px]">
              {g.items.map(([n, a]) => (
                <div key={n} className="w-[37.5px] flex justify-center">
                  <Icon name={n} s={30} arrow={!!a} />
                </div>
              ))}
            </div>
          </div>
        ))}
        <span className="absolute left-[1840px] top-[4px] text-[13px] text-[#9a9ab0]">»</span>
        <svg viewBox="0 0 52 46" className="absolute left-[1860px] top-[2px] w-[52px] h-[46px]">
          <text x="12" y="15" fontSize="17" fontStyle="italic" fill="#c81818" fontFamily="Liberation Sans, sans-serif">3</text>
          <text x="1" y="31" fontSize="22" fontStyle="italic" fill="#2a2a90" fontFamily="Liberation Sans, sans-serif">D</text>
          <text x="19" y="27" fontSize="22" fontStyle="italic" fill="#e09020" fontFamily="Liberation Sans, sans-serif">S</text>
          <text x="9" y="44" fontSize="13" fontWeight="700" fontStyle="italic" fill="#2a2a90" fontFamily="Liberation Sans, sans-serif">CATIA</text>
        </svg>
      </div>

      {/* status bar */}
      <div className="h-[31px] shrink-0 flex items-center bg-[#cfcfe6]">
        <span className="pl-[5px] pt-[2px] text-[15.5px] text-[#333]">Select an object or a command</span>
        <div className="ml-auto w-[374px] h-[27px] bg-white border-b border-[#aaa]" />
        <div className="ml-[1px] w-[40px] h-[29px] bg-[#d6d6dc] border border-[#eee] flex items-center justify-center">
          <svg width="20" height="20" viewBox="0 0 20 20"><path d="M4 3h9v9H4zM17 8v9H8" fill="none" stroke="#a8a8b0" strokeWidth="2" /></svg>
        </div>
        <div className="ml-[2px] w-[41px] h-[29px] bg-[#d6d6dc] border border-[#eee] flex items-center justify-center">
          <svg width="22" height="22" viewBox="0 0 22 22"><circle cx="10" cy="9" r="7" fill="none" stroke="#a8a8b0" strokeWidth="2" /><path d="M10 6v6M3 18h16" stroke="#a8a8b0" strokeWidth="2" /></svg>
        </div>
      </div>
      <div className="h-[4px] shrink-0 bg-[#1c1c1c]" />
    </div>
  );
}
